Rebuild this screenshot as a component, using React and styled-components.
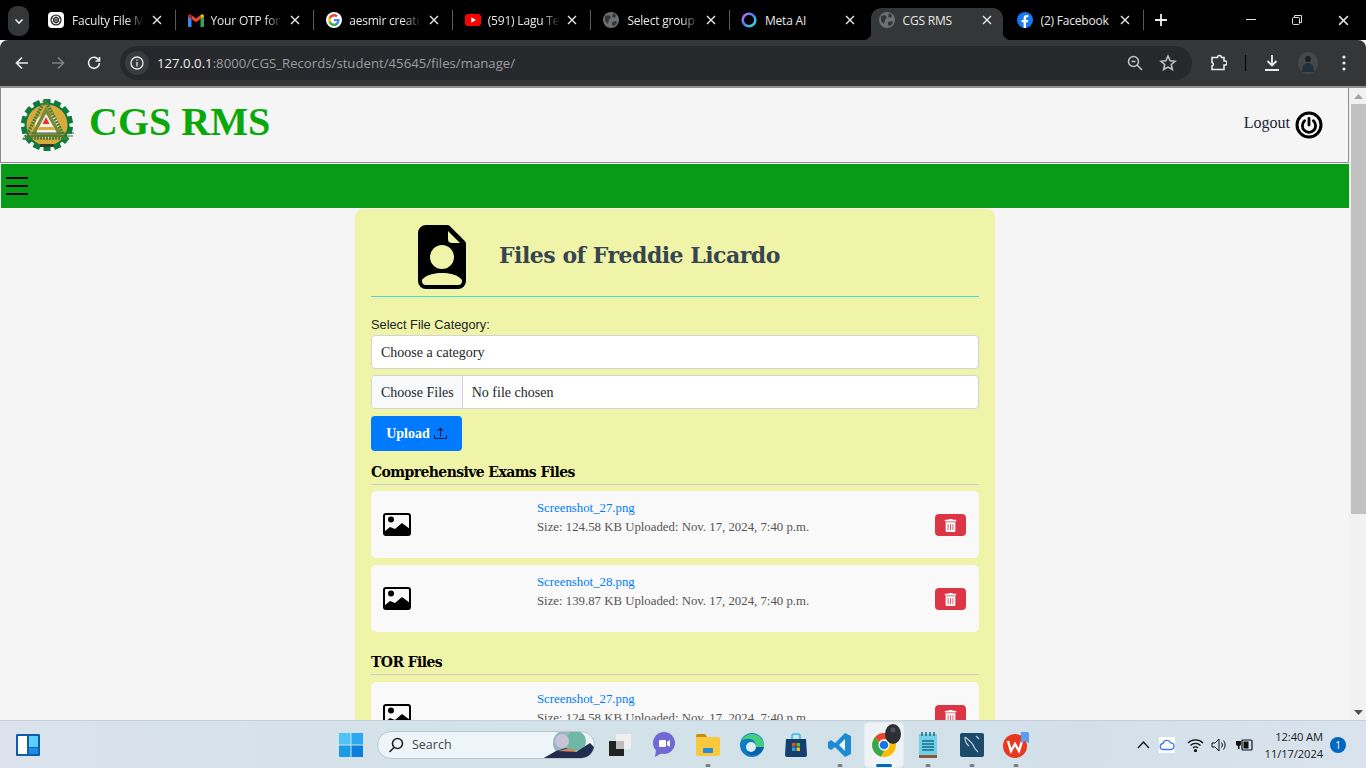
import React from "react";
import styled, { createGlobalStyle } from "styled-components";
import { BsFileEarmarkPersonFill, BsUpload } from "react-icons/bs";
import { FaTrashAlt } from "react-icons/fa";

const Global = createGlobalStyle`
  html, body { margin: 0; padding: 0; width: 1366px; height: 768px; overflow: hidden; background: #f5f5f5; }
  * { box-sizing: border-box; }
`;
const Screen = styled.div`
  width: 1366px; height: 768px; display: flex; flex-direction: column; overflow: hidden;
  font-family: "Liberation Serif", serif;
`;

/* ---------- Browser chrome ---------- */
const TabStrip = styled.div`
  height: 40px; flex: none; background: #000; display: flex; align-items: stretch; padding-left: 8px;
  font-family: "Open Sans", "Noto Sans", sans-serif; color: #e8e8e8; position: relative;
`;
const TabSearch = styled.div`
  width: 21px; height: 30px; margin: 6px 8px 0 0; border-radius: 9px; background: #353638;
  display: flex; align-items: center; justify-content: center;
`;
const Tab = styled.div`
  width: 138.6px; height: 40px; flex: none; display: flex; align-items: center; padding: 0 0 0 ${p => p.$pad || 11}px;
  position: relative; font-size: 12px; letter-spacing: -0.2px;
`;
const ActiveTab = styled(Tab)`
  background: #353638; border-radius: 10px 10px 0 0; margin: 8px 7px 0 2px; height: 32px; padding-bottom: 8px; width: 132px;
  &::before, &::after { content: ""; position: absolute; bottom: 0; width: 8px; height: 8px; }
  &::before { left: -8px; background: radial-gradient(circle at 0 0, #000 8px, #353638 8.5px); }
  &::after { right: -8px; background: radial-gradient(circle at 100% 0, #000 8px, #353638 8.5px); }
`;
const FbTab = styled(Tab)`
  width: 139px;
`;
const TabDivider = styled.span`
  position: absolute; right: ${p => p.$right || 0}px; top: 10px; width: 1px; height: 20px; background: #5a5a5a;
`;
const TabIcon = styled.span`
  width: 16px; height: 16px; flex: none; display: flex; align-items: center; justify-content: center;
`;
const TabTitle = styled.span`
  width: ${p => p.$w || 72}px; margin-left: ${p => p.$gap || 8}px; white-space: nowrap; overflow: hidden; flex: none;
  ${p => p.$fade && `mask-image: linear-gradient(to right, #000 76%, transparent);`}
`;
const TabClose = styled.span`
  margin-left: auto; margin-right: ${p => p.$right || 14}px; width: 10px; height: 10px; display: flex; flex: none;
`;
const NewTab = styled.div`
  width: 24px; height: 40px; display: flex; align-items: center; justify-content: center;
`;
const WinControls = styled.div`
  margin-left: auto; display: flex; align-items: center; height: 40px;
`;
const WinBtn = styled.div`
  width: 46px; display: flex; justify-content: center; align-items: center;
`;
const Toolbar = styled.div`
  height: 46px; flex: none; background: #353638; border-radius: 8px 8px 0 0; display: flex; align-items: center;
  padding: 0 0 0 12px; margin-bottom: 2px; box-shadow: 0 2px 0 #8f8f8f;
`;
const NavBtn = styled.div`
  width: 20px; height: 20px; margin-right: 16px; display: flex; align-items: center; justify-content: center; flex: none;
`;
const Omnibox = styled.div`
  width: 1072px; height: 34px; border-radius: 17px; background: #27282b; display: flex; align-items: center;
  padding: 0 15px 0 5px; flex: none; font-family: "Open Sans", "Noto Sans", sans-serif; font-size: 13.2px;
`;
const InfoChip = styled.div`
  width: 24px; height: 24px; border-radius: 50%; background: #3a3b3e; display: flex; align-items: center; justify-content: center; flex: none;
`;
const Url = styled.span`
  margin-left: 8px; color: #9a9da1;
  b { font-weight: 400; color: #f0f0f0; }
`;
const OmniRight = styled.div`
  margin-left: auto; display: flex; align-items: center; gap: 15px;
`;
const ToolRight = styled.div`
  display: flex; align-items: center; flex: none; margin-left: 17px;
`;
const ToolSep = styled.span`
  width: 1px; height: 16px; background: #000; margin: 0 17px 0 18px; flex: none;
`;

/* ---------- Page ---------- */
const Viewport = styled.div`
  flex: 1; min-height: 0; display: flex; overflow: hidden; background: #f5f5f5;
`;
const Page = styled.div`
  width: 1349px; flex: none; overflow: hidden;
`;
const Header = styled.header`
  height: 75px; background: #f5f5f5; border: 1px solid #8f8b8b; border-top: none; display: flex; align-items: center;
  padding: 0 25px 0 18px;
`;
const Brand = styled.h1`
  margin: 0 0 0 14px; font: 700 40px "Liberation Serif", serif; color: #0aa80a; line-height: 1; position: relative; top: -3px;
`;
const LogoutLink = styled.div`
  margin-left: auto; display: flex; align-items: center; gap: 5px; font-size: 16px; color: #1c2434;
  span { position: relative; top: -2px; }
`;
const NavBar = styled.nav`
  height: 44px; margin: 1px 0 0 1px; background: #079b18; display: flex; align-items: center; padding-left: 5px;
`;
const Burger = styled.div`
  width: 22px; display: flex; flex-direction: column; gap: 6px;
  i { display: block; height: 2px; background: #000; }
`;
const Card = styled.main`
  width: 640px; margin: 1px auto 0; background: #f0f4a8; border-radius: 8px; padding: 16px; position: relative; left: 0.5px;
`;
const CardHead = styled.div`
  display: flex; align-items: center; border-bottom: 1px solid #40e0d0; padding: 0 0 7px 39px; height: 72px;
  svg { flex: none; }
`;
const CardTitle = styled.h2`
  margin: 0 0 4px 25px; font: 700 22px "DejaVu Serif", serif; color: #36454f; letter-spacing: -0.5px; white-space: nowrap;
`;
const Label = styled.label`
  display: block; margin-top: 20px; font: 12.8px/16px "Liberation Sans", sans-serif; color: #212529;
`;
const SelectBox = styled.div`
  height: 34px; margin-top: 2px; background: #fff; border: 1px solid #ced4da; border-radius: 4px; padding: 2px 0 0 9px;
  display: flex; align-items: center; font-size: 14px; color: #212529;
`;
const FileBox = styled(SelectBox)`
  margin-top: 6px; padding: 0; overflow: hidden;
`;
const FileBtn = styled.span`
  background: #f8f9fa; height: 100%; display: flex; align-items: center; padding: 2px 8px 0 9px; border-right: 1px solid #ced4da;
`;
const FileState = styled.span`
  margin-left: 9px; padding-top: 2px;
`;
const UploadBtn = styled.button`
  display: flex; align-items: center; justify-content: center; gap: 4px; width: 91px; height: 35px; margin-top: 7px; border: none; border-radius: 4px;
  background: #007bff; color: #fff; font: 700 14px "Liberation Serif", serif; padding: 0;
`;
const SectionTitle = styled.h3`
  margin: ${p => (p.$first ? "11px 0 -1px" : "20px 0 0")}; font: 700 14px/20px "DejaVu Serif", serif; letter-spacing: -0.6px; color: #000;
  border-bottom: 1px solid #ccc; padding: 0 0 2px; height: 23px;
`;
const Row = styled.div`
  height: 67px; margin-top: 7px; background: #f9f9f9; border-radius: 5px; display: grid; grid-template-columns: 154px 1fr 31px;
  padding: 10px 13px 0 12px;
`;
const ThumbCell = styled.div`
  display: flex; align-items: center; height: 47px;
`;
const FileInfo = styled.div`
  font-size: 12.8px; line-height: 19px; color: #555; position: relative; top: -2px; height: 0;
  a { display: block; color: #007bff; text-decoration: none; }
`;
const DeleteBtn = styled.div`
  width: 31px; height: 22px; margin-top: 13px; border-radius: 4px; background: #dc3545; display: flex; align-items: center; justify-content: center;
`;

/* ---------- Scrollbar ---------- */
const Scrollbar = styled.div`
  width: 17px; flex: none; background: #f1f1f1; display: flex; flex-direction: column; align-items: center; padding-left: 2px;
`;
const Arrow = styled.div`
  height: 16px; flex: none; display: flex; align-items: center; justify-content: center; width: 100%;
`;
const Thumb = styled.div`
  width: 100%; height: 410px; background: #c1c1c1;
`;
const ScrollFill = styled.div`
  flex: 1;
`;

/* ---------- Taskbar ---------- */
const Taskbar = styled.footer`
  height: 48px; flex: none; background: linear-gradient(90deg, #dbe2ec 0%, #d4e2ea 30%, #d2e2e8 50%, #d3e0ea 80%, #d9e3ee 100%);
  border-top: 1px solid #c3d0da; display: flex; align-items: center; padding-left: 16px; position: relative;
  font-family: "Open Sans", "Noto Sans", sans-serif; color: #1a1a1a;
`;
const Start = styled.div`
  margin-left: 299px; display: flex; flex: none;
`;
const SearchBox = styled.div`
  width: 218px; height: 28px; margin-left: 14px; border-radius: 14px; background: #eef5f8; border: 1px solid #b9c7cc; display: flex;
  align-items: center; padding-left: 10px; font-size: 12.5px; color: #444; flex: none; overflow: hidden; gap: 8px;
  svg:last-child { margin-left: auto; }
`;
const TaskIcons = styled.div`
  display: flex; align-items: center; margin-left: 3px; flex: none;
`;
const TaskIcon = styled.div`
  width: 44px; height: 44px; display: flex; align-items: center; justify-content: center; position: relative; flex: none;
  ${p => p.$active && `background:#eef3f6; border-radius:4px; width:38px; margin:0 3px; box-shadow: 0 0 0 1px #e4ebef;`}
  &::after {
    content: ""; display: ${p => (p.$dot || p.$active ? "block" : "none")}; position: absolute; bottom: 0px; left: 50%;
    transform: translateX(-50%); height: 3px; border-radius: 2px;
    width: ${p => (p.$active ? 16 : 5)}px; background: ${p => (p.$active ? "#0067c0" : "#7a7f84")};
  }
`;
const Tray = styled.div`
  margin-left: 95px; display: flex; align-items: center; flex: none;
`;
const TrayIcon = styled.div`
  width: ${p => p.$w || 24}px; display: flex; align-items: center; justify-content: center; flex: none;
`;
const Clock = styled.div`
  width: 62px; margin-left: 2px; text-align: right; font-size: 11.2px; line-height: 17px; letter-spacing: -0.1px; color: #1a1a1a;
`;
const Badge = styled.div`
  width: 16px; height: 16px; margin-left: 7px; border-radius: 50%; background: #0067c0; color: #fff; font-size: 10px; display: flex; align-items: center; justify-content: center; flex: none;
`;

/* ---------- Drawn icons ---------- */
const Globe = ({ c = "#6d7175" }) => (
  <svg width="16" height="16" viewBox="0 0 16 16"><circle cx="8" cy="8" r="8" fill={c} /><path d="M2 4l4-1 2 2-2 3-1 4-3-3zM10 1l3 2-1 3-3-1zM9 10l4-1 1 2-3 3-2-1z" fill="#353638" /></svg>
);
const X = ({ s = 10, c = "#e8e8e8" }) => (
  <svg width={s} height={s} viewBox="0 0 10 10"><path d="M1 1l8 8M9 1l-8 8" stroke={c} strokeWidth="1.4" /></svg>
);
const OpenAI = () => (
  <svg width="16" height="16" viewBox="0 0 16 16"><rect width="16" height="16" rx="4" fill="#fff" /><circle cx="8" cy="8" r="5" fill="none" stroke="#222" strokeWidth="1.2" /><circle cx="8" cy="8" r="2.5" fill="none" stroke="#222" strokeWidth="1.2" /><path d="M8 3v10M3.7 5.5l8.600 5M12.300 5.500l-8.600 5" stroke="#222" strokeWidth=".7" /></svg>
);
const Gmail = () => (
  <svg width="16" height="13" viewBox="0 0 16 13"><path d="M0 2v10a1 1 0 001 1h2.500V5z" fill="#4285f4" /><path d="M16 2v10a1 1 0 01-1 1h-2.500V5z" fill="#34a853" /><path d="M3.500 5V1L8 4.500 12.500 1v4L8 8.300z" fill="#ea4335" /><path d="M0 2c0-1.800 2-2.500 3.500-1v4L0 2.500z" fill="#c5221f" /><path d="M16 2c0-1.800-2-2.500-3.500-1v4L16 2.500z" fill="#fbbc04" /></svg>
);
const GoogleG = () => (
  <svg width="16" height="16" viewBox="0 0 16 16"><circle cx="8" cy="8" r="8" fill="#fff" /><path d="M13.600 8.100c0-.4 0-.8-.1-1.200H8v2.300h3.200c-.1.800-.6 1.400-1.200 1.800v1.500h1.900c1.100-1 1.700-2.500 1.700-4.400z" fill="#4285f4" /><path d="M8 14c1.600 0 2.900-.5 3.900-1.500L10 11c-.5.400-1.200.6-2 .6-1.500 0-2.800-1-3.300-2.400H2.800v1.500C3.800 12.700 5.800 14 8 14z" fill="#34a853" /><path d="M4.700 9.200C4.500 8.500 4.500 7.500 4.700 6.800V5.300H2.800c-.8 1.600-.8 3.800 0 5.400z" fill="#fbbc04" /><path d="M8 4.400c.9 0 1.600.3 2.200.9l1.700-1.700C10.900 2.600 9.500 2 8 2 5.800 2 3.800 3.300 2.800 5.300l1.900 1.500C5.200 5.400 6.500 4.400 8 4.400z" fill="#ea4335" /></svg>
);
const YouTube = () => (
  <svg width="16" height="12" viewBox="0 0 16 12"><rect width="16" height="12" rx="3" fill="#f00" /><path d="M6.300 3.300L11 6 6.300 8.700z" fill="#fff" /></svg>
);
const MetaRing = () => (
  <svg width="16" height="16" viewBox="0 0 16 16"><defs><linearGradient id="mr" x1="0" y1="0" x2="1" y2="1"><stop offset="0" stopColor="#e66de8" /><stop offset=".4" stopColor="#4a7dff" /><stop offset="1" stopColor="#3ce0d0" /></linearGradient></defs><circle cx="8" cy="8" r="6.300" fill="none" stroke="url(#mr)" strokeWidth="2.600" /></svg>
);
const Fb = () => (
  <svg width="16" height="16" viewBox="0 0 16 16"><circle cx="8" cy="8" r="8" fill="#1877f2" /><path d="M10.900 10.300l.4-2.300H9V6.500c0-.7.300-1.300 1.300-1.300h1V3.200S10.500 3 9.600 3C7.800 3 6.600 4.100 6.600 6.100V8h-2v2.300h2V16H9v-5.700z" fill="#fff" /></svg>
);
const Logo = () => (
  <svg width="56" height="56" viewBox="0 0 56 56">
    <g fill="#0c7a3c">{Array.from({ length: 14 }).map((_, i) => (
      <rect key={i} x="24.500" y="2" width="7" height="7" transform={`rotate(${(i * 360) / 14} 28 28)`} />
    ))}</g>
    <circle cx="28" cy="28" r="22.500" fill="#0c7a3c" />
    <circle cx="28" cy="28" r="20.500" fill="#d9a93a" />
    <circle cx="28" cy="29" r="12" fill="#f3f3ee" />
    <path d="M26 3L46 41H6z" fill="none" stroke="#44803c" strokeWidth="3.500" strokeDasharray="2 1" />
    <path d="M27 13L41 38H14z" fill="none" stroke="#7c8a35" strokeWidth="3.500" />
    <path d="M27 20l3.500 7h-7z" fill="#e2342f" />
    <path d="M21 30h13l2 3H18z" fill="#d9a93a" />
    <path d="M8 36h47M8 39h46" stroke="#3b6b3a" strokeWidth="1" />
    <rect x="21" y="47" width="14" height="3" fill="#2f3a2a" />
  </svg>
);
const PowerRing = () => (
  <svg width="28" height="28" viewBox="0 0 28 28" fill="none" stroke="#000"><circle cx="14" cy="14" r="12" strokeWidth="3" /><path d="M9.600 9.800a6.600 6.600 0 108.800 0" strokeWidth="2.800" strokeLinecap="round" /><path d="M14 7.500v6.500" strokeWidth="2.800" strokeLinecap="round" /></svg>
);
const ImageGlyph = () => (
  <svg width="28" height="23" viewBox="0 0 28 23"><rect x="1" y="1" width="26" height="21" rx="2" fill="none" stroke="#000" strokeWidth="2" /><circle cx="8" cy="6.500" r="3" fill="#000" /><path d="M1 22v-3l6-5 5 2 7-6 8 6v6z" fill="#000" /></svg>
);
const ChromeLogo = () => (
  <svg width="24" height="24" viewBox="0 0 24 24"><circle cx="12" cy="12" r="12" fill="#fbbc04" /><path d="M12 0a12 12 0 0110.400 6H12a6 6 0 00-5.200 3L3.300 4A12 12 0 0112 0z" fill="#ea4335" /><path d="M3.300 4l5.200 9a4 4 0 003.500 5l-3.200 5.600A12 12 0 013.300 4z" fill="#34a853" /><circle cx="12" cy="12" r="5.500" fill="#fff" /><circle cx="12" cy="12" r="4.300" fill="#1a73e8" /></svg>
);

const tabs = [
  { t: "Faculty File M", i: <OpenAI />, fade: true, pad: 11 },
  { t: "Your OTP for", i: <Gmail />, fade: true, pad: 12, gap: 7 },
  { t: "aesmir creatu", i: <GoogleG />, fade: true, pad: 12, gap: 7 },
  { t: "(591) Lagu Te", i: <YouTube />, fade: true, pad: 12, gap: 7 },
  { t: "Select group", i: <Globe />, fade: true, pad: 12, gap: 8 },
  { t: "Meta AI", i: <MetaRing />, pad: 11, gap: 8 },
];

const File = ({ name, meta }) => (
  <Row>
    <ThumbCell><ImageGlyph /></ThumbCell>
    <FileInfo><a>{name}</a><span>{meta}</span></FileInfo>
    <DeleteBtn><FaTrashAlt size={13} color="#fff" /></DeleteBtn>
  </Row>
);

export default function App() {
  return (
    <Screen>
      <Global />
      <TabStrip>
        <TabSearch>
          <svg width="10" height="7" viewBox="0 0 10 7" fill="none"><path d="M1.500 1.500L5 5l3.500-3.500" stroke="#eee" strokeWidth="1.600" /></svg>
        </TabSearch>
        {tabs.map(t => (
          <Tab key={t.t} $pad={t.pad}>
            <TabIcon>{t.i}</TabIcon>
            <TabTitle $fade={t.fade} $gap={t.gap}>{t.t}</TabTitle>
            <TabClose><X /></TabClose>
            {t.t !== "Meta AI" && <TabDivider />}
          </Tab>
        ))}
        <ActiveTab $pad={8}>
          <TabIcon><Globe /></TabIcon>
          <TabTitle $gap={8} $w={70}>CGS RMS</TabTitle>
          <TabClose $right={11}><X /></TabClose>
        </ActiveTab>
        <FbTab $pad={7}>
          <TabIcon><Fb /></TabIcon>
          <TabTitle $gap={8} $w={72}>(2) Facebook</TabTitle>
          <TabClose $right={19}><X /></TabClose>
          <TabDivider $right={5} />
        </FbTab>
        <NewTab>
          <svg width="12" height="12" viewBox="0 0 12 12"><path d="M6 0v12M0 6h12" stroke="#eee" strokeWidth="1.800" /></svg>
        </NewTab>
        <WinControls>
          <WinBtn><svg width="10" height="2"><rect width="10" height="1" fill="#ddd" /></svg></WinBtn>
          <WinBtn><svg width="10" height="10" viewBox="0 0 10 10" fill="none" stroke="#ddd"><rect x=".5" y="2.500" width="7" height="7" rx="1" /><path d="M2.500 2V.5h7v7H8" /></svg></WinBtn>
          <WinBtn><X s={11} c="#ddd" /></WinBtn>
        </WinControls>
      </TabStrip>

      <Toolbar>
        <NavBtn><svg width="14" height="14" viewBox="0 0 14 14" fill="none" stroke="#e8eaed" strokeWidth="1.700"><path d="M13 7H2M7 1.500L1.500 7 7 12.500" /></svg></NavBtn>
        <NavBtn><svg width="14" height="14" viewBox="0 0 14 14" fill="none" stroke="#7d7f82" strokeWidth="1.700"><path d="M1 7h11M7 1.500L12.500 7 7 12.500" /></svg></NavBtn>
        <NavBtn><svg width="14" height="14" viewBox="0 0 14 14" fill="none" stroke="#e8eaed" strokeWidth="1.600"><path d="M12 4.500A5.500 5.500 0 1012.500 7" /><path d="M12.500 1v4h-4" /></svg></NavBtn>
        <Omnibox>
          <InfoChip>
            <svg width="14" height="14" viewBox="0 0 14 14" fill="none" stroke="#e8eaed" strokeWidth="1.300"><circle cx="7" cy="7" r="6" /><path d="M7 6v4.500M7 3.500v1.300" /></svg>
          </InfoChip>
          <Url><b>127.0.0.1</b>:8000/CGS_Records/student/45645/files/manage/</Url>
          <OmniRight>
            <svg width="18" height="18" viewBox="0 0 18 18" fill="none" stroke="#c4c7c5" strokeWidth="1.500"><circle cx="7.500" cy="7.500" r="5" /><path d="M11 11l5 5M5.500 7.500h4" /></svg>
            <svg width="18" height="18" viewBox="0 0 18 18" fill="none" stroke="#c4c7c5" strokeWidth="1.500"><path d="M9 2l2.100 4.700 5 .5-3.800 3.300 1.100 5L9 13l-4.400 2.500 1.100-5L1.900 7.200l5-.5z" /></svg>
          </OmniRight>
        </Omnibox>
        <ToolRight>
          <svg width="18" height="18" viewBox="0 0 18 18" fill="none" stroke="#e8eaed" strokeWidth="1.600"><path d="M3 3.500h5.500a2 2 0 014 0H15v3.500h1a2 2 0 010 4h-1v4.500H3v-3.500a1.800 1.800 0 000-3.500V7z" /></svg>
          <ToolSep />
          <svg width="18" height="18" viewBox="0 0 18 18" fill="none" stroke="#e8eaed" strokeWidth="1.800"><path d="M9 1v10M4.500 7L9 11.500 13.500 7M2 16h14" /></svg>
          <svg width="20" height="22" viewBox="0 0 20 22" style={{ marginLeft: 17 }}><ellipse cx="10" cy="11" rx="10" ry="11" fill="#46484a" /><circle cx="10" cy="7" r="3" fill="#1b1f24" /><path d="M4 20c0-7 3-9 6-9s6 2 6 9z" fill="#20303c" /></svg>
          <svg width="4" height="16" viewBox="0 0 4 16" style={{ marginLeft: 24 }}><circle cx="2" cy="2" r="1.600" fill="#e8eaed" /><circle cx="2" cy="8" r="1.600" fill="#e8eaed" /><circle cx="2" cy="14" r="1.600" fill="#e8eaed" /></svg>
        </ToolRight>
      </Toolbar>

      <Viewport>
        <Page>
          <Header>
            <Logo />
            <Brand>CGS RMS</Brand>
            <LogoutLink><span>Logout</span><PowerRing /></LogoutLink>
          </Header>
          <NavBar><Burger><i /><i /><i /></Burger></NavBar>
          <Card>
            <CardHead>
              <BsFileEarmarkPersonFill size={64} color="#000" />
              <CardTitle>Files of Freddie Licardo</CardTitle>
            </CardHead>
            <Label>Select File Category:</Label>
            <SelectBox>Choose a category</SelectBox>
            <FileBox><FileBtn>Choose Files</FileBtn><FileState>No file chosen</FileState></FileBox>
            <UploadBtn>Upload <BsUpload size={13} color="#000" /></UploadBtn>
            <SectionTitle $first>Comprehensive Exams Files</SectionTitle>
            <File name="Screenshot_27.png" meta="Size: 124.58 KB Uploaded: Nov. 17, 2024, 7:40 p.m." />
            <File name="Screenshot_28.png" meta="Size: 139.87 KB Uploaded: Nov. 17, 2024, 7:40 p.m." />
            <SectionTitle>TOR Files</SectionTitle>
            <File name="Screenshot_27.png" meta="Size: 124.58 KB Uploaded: Nov. 17, 2024, 7:40 p.m." />
          </Card>
        </Page>
        <Scrollbar>
          <Arrow><svg width="9" height="5"><path d="M0 5L4.500 0 9 5z" fill="#a3a3a3" /></svg></Arrow>
          <Thumb />
          <ScrollFill />
          <Arrow><svg width="9" height="5"><path d="M0 0L4.500 5 9 0z" fill="#505050" /></svg></Arrow>
        </Scrollbar>
      </Viewport>

      <Taskbar>
        <svg width="24" height="22" viewBox="0 0 24 22"><rect width="24" height="22" rx="1" fill="#0f5ca8" /><rect x="2" y="2" width="9" height="18" fill="#fff" /><rect x="13" y="2" width="9" height="11" fill="#5ad0ff" /><rect x="13" y="14" width="9" height="6" fill="#1a8fe3" /></svg>
        <Start>
          <svg width="24" height="24" viewBox="0 0 24 24"><rect width="11.500" height="11.500" fill="#4fc3f7" /><rect x="12.500" width="11.500" height="11.500" fill="#29a9ef" /><rect y="12.500" width="11.500" height="11.500" fill="#1e9be8" /><rect x="12.500" y="12.500" width="11.500" height="11.500" fill="#0a7fdb" /></svg>
        </Start>
        <SearchBox>
          <svg width="16" height="16" viewBox="0 0 16 16" fill="none" stroke="#222" strokeWidth="1.600"><circle cx="9.500" cy="6.500" r="5" /><path d="M6 10.500L1.500 15" /></svg>
          Search
          <svg width="52" height="28" viewBox="0 0 52 28"><circle cx="24" cy="12" r="13" fill="#93b8c4" /><circle cx="34" cy="10" r="10" fill="#6fb8a6" /><circle cx="20" cy="10" r="7" fill="#c9c3d8" /><path d="M0 28l14-8 10-3 10 4 14-9 4 4v12z" fill="#232c4e" /><path d="M16 20l12-3 8 4z" fill="#c98f5a" /></svg>
        </SearchBox>
        <TaskIcons>
          <TaskIcon><svg width="22" height="22" viewBox="0 0 22 22"><rect x="7" y="0" width="15" height="15" fill="#efefef" /><rect y="7" width="15" height="15" fill="#222" /><rect x="7" y="7" width="8" height="8" fill="#bdbdbd" /></svg></TaskIcon>
          <TaskIcon><svg width="24" height="26" viewBox="0 0 24 26"><circle cx="12" cy="11" r="11" fill="#7168d8" /><path d="M4 18l-1 7 7-4z" fill="#7168d8" /><rect x="7" y="8" width="7" height="7" rx="1" fill="#fff" /><path d="M15 10l3-2v7l-3-2z" fill="#fff" /></svg></TaskIcon>
          <TaskIcon $dot><svg width="24" height="22" viewBox="0 0 24 22"><path d="M0 2a2 2 0 012-2h7l2 3h11a2 2 0 012 2v15a2 2 0 01-2 2H2a2 2 0 01-2-2z" fill="#f8c93e" /><path d="M0 2a2 2 0 012-2h7l2 3H0z" fill="#c98f12" /><rect x="7" y="14" width="10" height="5" rx="1" fill="#2a8bd6" /></svg></TaskIcon>
          <TaskIcon><svg width="24" height="24" viewBox="0 0 24 24"><circle cx="12" cy="12" r="12" fill="#0f7bc4" /><path d="M24 13c0-7-5-12-12-12C7 1 3 4 1 8c4-3 10-3 13 0 2 2 2 5 0 6h10z" fill="#43cf7f" /><path d="M14 14c-4 0-7 1-7 4 0 2 3 4 6 4 5 0 9-3 11-8z" fill="#0a5fa8" /><circle cx="11" cy="14" r="5" fill="#dbeef7" /></svg></TaskIcon>
          <TaskIcon><svg width="22" height="24" viewBox="0 0 22 24"><path d="M7 6V3a2 2 0 012-2h4a2 2 0 012 2v3" fill="none" stroke="#2fb6ef" strokeWidth="1.500" /><path d="M1 6h20l1 16a2 2 0 01-2 2H2a2 2 0 01-2-2z" fill="#13406e" /><rect x="7" y="10" width="3.500" height="3.500" fill="#e84a2c" /><rect x="11.500" y="10" width="3.500" height="3.500" fill="#6ab82e" /><rect x="7" y="14.500" width="3.500" height="3.500" fill="#22a5e8" /><rect x="11.500" y="14.500" width="3.500" height="3.500" fill="#f9b91e" /></svg></TaskIcon>
          <TaskIcon $dot><svg width="24" height="24" viewBox="0 0 24 24"><path d="M17 0l6 3v18l-6 3L7 14l-4 3-3-2V9l3-2 4 3z" fill="#1f8ad2" /><path d="M17 6l-6 6 6 6z" fill="#eaf4fb" /></svg></TaskIcon>
          <TaskIcon $active>
            <ChromeLogo />
            <svg width="18" height="20" viewBox="0 0 18 20" style={{ position: "absolute", top: 1, right: 1 }}><ellipse cx="9" cy="10" rx="8" ry="10" fill="#2c2f33" /><circle cx="9" cy="6" r="2.500" fill="#50545a" /></svg>
          </TaskIcon>
          <TaskIcon $dot><svg width="18" height="26" viewBox="0 0 18 26"><rect y="2" width="18" height="21" fill="#6fd1e6" /><rect y="23" width="18" height="3" fill="#8c5a32" /><path d="M3 0v4M7 0v4M11 0v4M15 0v4" stroke="#20546b" strokeWidth="1.300" /><path d="M3 9h12M3 12h12M3 15h12M3 18h12" stroke="#1b6a88" strokeWidth="1.300" /></svg></TaskIcon>
          <TaskIcon $dot><svg width="24" height="24" viewBox="0 0 24 24"><rect width="24" height="24" rx="2" fill="#1c4a6b" /><path d="M5 4c4 3 8 6 9 10 1 2 2 3 4 5M5 4c0 4 1 7 4 9M16 3l3 3" fill="none" stroke="#b7cedd" strokeWidth="1.200" /></svg></TaskIcon>
          <TaskIcon $dot><svg width="26" height="26" viewBox="0 0 26 26"><circle cx="12" cy="14" r="12" fill="#e8391f" /><path d="M5 9l3 10 4-7 4 7 3-10" fill="none" stroke="#fff" strokeWidth="2.400" /><path d="M18 0h6a2 2 0 012 2v9l-4-2-4 2z" fill="#5a9cf0" /></svg></TaskIcon>
        </TaskIcons>
        <Tray>
          <TrayIcon $w={20}><svg width="13" height="8" viewBox="0 0 13 8" fill="none" stroke="#111" strokeWidth="1.300"><path d="M1 7l5.500-6L12 7" /></svg></TrayIcon>
          <TrayIcon $w={28}><svg width="16" height="16" viewBox="0 0 16 16"><rect width="16" height="16" fill="#fff" /><path d="M4.500 12.500a3 3 0 01-.5-6 4 4 0 017.600-.6 3.200 3.200 0 01.2 6.600z" fill="none" stroke="#3b7bf0" strokeWidth="1.300" /></svg></TrayIcon>
          <TrayIcon $w={28}><svg width="17" height="14" viewBox="0 0 17 14" fill="none" stroke="#111" strokeWidth="1.200"><path d="M1 5a10.500 10.500 0 0115 0M3.500 7.500a7 7 0 0110 0M6 10a3.500 3.500 0 015 0" /><circle cx="8.500" cy="12.500" r="1" fill="#111" /></svg></TrayIcon>
          <TrayIcon $w={20}><svg width="16" height="14" viewBox="0 0 16 14" fill="none" stroke="#111"><path d="M1 5h3l4-4v12L4 9H1zM10.500 4.500a4 4 0 010 5M12.500 2.500a7 7 0 010 9" /></svg></TrayIcon>
          <TrayIcon $w={30}><svg width="17" height="14" viewBox="0 0 17 14"><path d="M1 0v3M4 0v3M0 3h5v3a2 2 0 01-1.500 2v3H2V8A2 2 0 010 6z" fill="#111" /><rect x="6" y="2" width="10" height="10" rx="1" fill="none" stroke="#111" strokeWidth="1.200" /><rect x="7.500" y="3.500" width="5" height="7" fill="#111" /></svg></TrayIcon>
          <Clock>12:40 AM<br />11/17/2024</Clock>
          <Badge>1</Badge>
        </Tray>
      </Taskbar>
    </Screen>
  );
}
